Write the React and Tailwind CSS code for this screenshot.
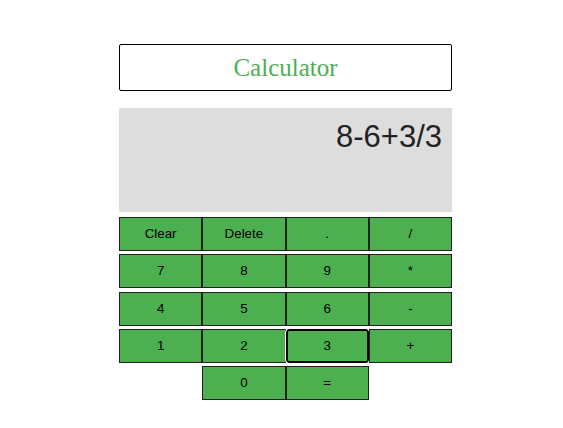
import React from "react";

const rows = [
  ["Clear", "Delete", ".", "/"],
  ["7", "8", "9", "*"],
  ["4", "5", "6", "-"],
  ["1", "2", "3", "+"],
];

const Key = ({ label, focused }) => (
  <button
    className={
      "h-[34px] w-[83.25px] bg-[#4caf50] text-[13.33px] text-black font-['Arial','Liberation_Sans',sans-serif] " +
      (focused
        ? "border-2 border-black rounded-[3px] outline outline-1 outline-white"
        : "border border-[#222]")
    }
  >
    {label}
  </button>
);

export default function App() {
  return (
    <div className="w-[563px] h-[428px] bg-white flex pl-[119px]">
      <div className="w-[333px] mt-[44px] flex flex-col">
        <div className="h-[47px] border border-black rounded-[2px] flex items-center justify-center">
          <h1 className="text-[25px] text-[#4caf50] font-['Liberation_Serif','Times_New_Roman',serif]">
            Calculator
          </h1>
        </div>
        <div className="mt-[17px] h-[104px] bg-[#dddddd] px-[10px] pt-[6px] text-right">
          <span className="text-[31px] text-[#222] font-['Liberation_Sans',Arial,sans-serif]">
            8-6+3/3
          </span>
        </div>
        <div className="mt-[5px] flex flex-col gap-[3.25px]">
          {rows.map((row, i) => (
            <div key={i} className="flex">
              {row.map((k) => (
                <Key key={k} label={k} focused={k === "3"} />
              ))}
            </div>
          ))}
          <div className="flex justify-center">
            <Key label="0" />
            <Key label="=" />
          </div>
        </div>
      </div>
    </div>
  );
}
